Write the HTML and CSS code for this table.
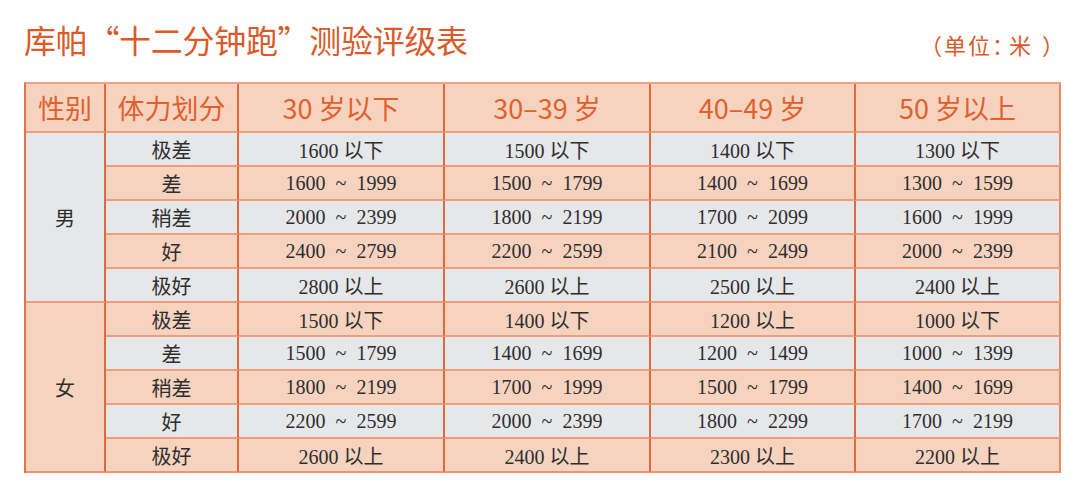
FILE: index.html
```html
<!DOCTYPE html>
<html lang="zh-CN">
<head>
<meta charset="utf-8">
<title>库帕“十二分钟跑”测验评级表</title>
<link rel="stylesheet" href="styles.css">
</head>
<body>
<div class="page">
  <header class="title-bar">
    <h1 class="title">库帕<span class="q">“</span>十二分钟跑<span class="q">”</span>测验评级表</h1>
    <span class="unit">（单位<span class="colon">：</span>米<span class="close">）</span></span>
  </header>
  <div class="grid">
    <div class="cell head">性别</div>
    <div class="cell head">体力划分</div>
    <div class="cell head">30 岁以下</div>
    <div class="cell head">30–39 岁</div>
    <div class="cell head">40–49 岁</div>
    <div class="cell head">50 岁以上</div>

    <div class="cell sex g">男</div>
    <div class="cell g">极差</div><div class="cell g num">1600 以下</div><div class="cell g num">1500 以下</div><div class="cell g num">1400 以下</div><div class="cell g num last">1300 以下</div>
    <div class="cell p">差</div><div class="cell p num">1600 &nbsp;~&nbsp; 1999</div><div class="cell p num">1500 &nbsp;~&nbsp; 1799</div><div class="cell p num">1400 &nbsp;~&nbsp; 1699</div><div class="cell p num last">1300 &nbsp;~&nbsp; 1599</div>
    <div class="cell g">稍差</div><div class="cell g num">2000 &nbsp;~&nbsp; 2399</div><div class="cell g num">1800 &nbsp;~&nbsp; 2199</div><div class="cell g num">1700 &nbsp;~&nbsp; 2099</div><div class="cell g num last">1600 &nbsp;~&nbsp; 1999</div>
    <div class="cell p">好</div><div class="cell p num">2400 &nbsp;~&nbsp; 2799</div><div class="cell p num">2200 &nbsp;~&nbsp; 2599</div><div class="cell p num">2100 &nbsp;~&nbsp; 2499</div><div class="cell p num last">2000 &nbsp;~&nbsp; 2399</div>
    <div class="cell g">极好</div><div class="cell g num">2800 以上</div><div class="cell g num">2600 以上</div><div class="cell g num">2500 以上</div><div class="cell g num last">2400 以上</div>

    <div class="cell sex p end">女</div>
    <div class="cell p">极差</div><div class="cell p num">1500 以下</div><div class="cell p num">1400 以下</div><div class="cell p num">1200 以上</div><div class="cell p num last">1000 以下</div>
    <div class="cell g">差</div><div class="cell g num">1500 &nbsp;~&nbsp; 1799</div><div class="cell g num">1400 &nbsp;~&nbsp; 1699</div><div class="cell g num">1200 &nbsp;~&nbsp; 1499</div><div class="cell g num last">1000 &nbsp;~&nbsp; 1399</div>
    <div class="cell p">稍差</div><div class="cell p num">1800 &nbsp;~&nbsp; 2199</div><div class="cell p num">1700 &nbsp;~&nbsp; 1999</div><div class="cell p num">1500 &nbsp;~&nbsp; 1799</div><div class="cell p num last">1400 &nbsp;~&nbsp; 1699</div>
    <div class="cell g">好</div><div class="cell g num">2200 &nbsp;~&nbsp; 2599</div><div class="cell g num">2000 &nbsp;~&nbsp; 2399</div><div class="cell g num">1800 &nbsp;~&nbsp; 2299</div><div class="cell g num last">1700 &nbsp;~&nbsp; 2199</div>
    <div class="cell p end">极好</div><div class="cell p num end">2600 以上</div><div class="cell p num end">2400 以上</div><div class="cell p num end">2300 以上</div><div class="cell p num last end">2200 以上</div>
  </div>
</div>
</body>
</html>
```

FILE: styles.css
```css
html, body {
  margin: 0;
  padding: 0;
  background: #ffffff;
}

.page {
  width: 1080px;
  height: 488px;
  box-sizing: border-box;
  padding: 23px 0 0 24px;
}

.title-bar {
  display: flex;
  justify-content: space-between;
  align-items: flex-end;
  width: 1037px;
}

.title {
  margin: 0;
  font-family: "Noto Sans CJK SC", "Noto Sans", sans-serif;
  font-weight: 400;
  font-size: 32px;
  line-height: 32px;
  color: #da5a2a;
  letter-spacing: -0.3px;
}

.title .q {
  display: inline-block;
  width: 31.7px;
  text-align: center;
}

.unit {
  font-family: "Noto Sans CJK SC", "Noto Sans", sans-serif;
  font-size: 22px;
  line-height: 22px;
  color: #da5a2a;
  letter-spacing: 2px;
  margin-right: -3px;
}

.unit .colon {
  letter-spacing: -5px;
}

.unit .close {
  padding-left: 9px;
  letter-spacing: 0;
}

.grid {
  margin-top: 27px;
  display: grid;
  grid-template-columns: 80px 133px 206px 206px 205px 205px;
  grid-template-rows: 49px repeat(10, 34.05px);
  width: 1035px;
  border-top: 2px solid #eda283;
  border-left: 2px solid #e47447;
}

.cell {
  display: flex;
  align-items: center;
  justify-content: center;
  box-sizing: border-box;
  border-right: 2px solid #e0693b;
  border-bottom: 2px solid #ec9e7d;
  font-family: "Liberation Serif", "Noto Sans CJK SC", serif;
  font-size: 20px;
  color: #2e2e30;
  white-space: nowrap;
}

.cell.last {
  border-right-color: #e98a62;
}

.cell.end {
  border-bottom-color: #ea9470;
}

.head {
  background: #f6d3bf;
  font-family: "Noto Sans CJK SC", "Noto Sans", sans-serif;
  font-size: 27px;
  color: #e0612d;
  padding-bottom: 1px;
}

.head:nth-child(6) {
  border-right-color: #e98a62;
}

.sex {
  grid-row: span 5;
}

.g {
  background: #e6e7e9;
}

.p {
  background: #f6d3bf;
}
```
